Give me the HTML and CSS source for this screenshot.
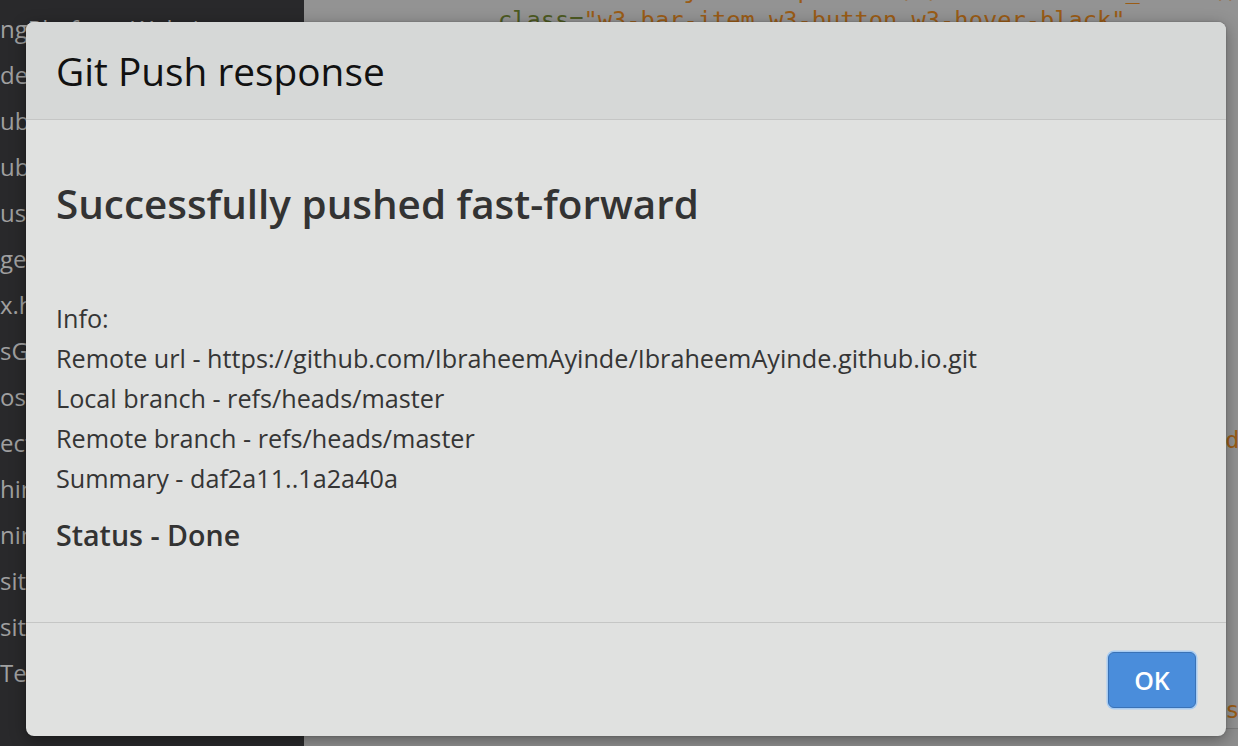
FILE: index.html
```html
<!DOCTYPE html>
<html>
<head>
<meta charset="utf-8">
<title>Git Push response</title>
<link rel="stylesheet" href="styles.css">
</head>
<body>
<div class="app">
  <aside class="sidebar">
    <div class="file">ngPlatform Website</div>
    <div class="file">dex</div>
    <div class="file">ub</div>
    <div class="file">ub</div>
    <div class="file">ush</div>
    <div class="file">geS</div>
    <div class="file">x.h</div>
    <div class="file">sG</div>
    <div class="file">os</div>
    <div class="file">ect</div>
    <div class="file">hin</div>
    <div class="file">nin</div>
    <div class="file">site</div>
    <div class="file">site</div>
    <div class="file">Ter</div>
  </aside>
  <main class="editor">
    <div class="code">
      <div class="line">    <span class="str">&lt;a href="javascript:void(0)" onclick="</span><span class="fn">w3_close()</span></div>
      <div class="line"><span class="attr">class=</span><span class="str">"w3-bar-item w3-button w3-hover-black"</span></div>
      <div class="line"> </div>
      <div class="line"> </div>
      <div class="line"> </div>
      <div class="line"> </div>
      <div class="line"> </div>
      <div class="line"> </div>
      <div class="line"> </div>
      <div class="line"> </div>
      <div class="line"> </div>
      <div class="line"> </div>
      <div class="line"> </div>
      <div class="line"> </div>
      <div class="line"> </div>
      <div class="line"><span class="attr">  class=</span><span class="str">"w3-bar-item w3-button w3-hover-white w3-wide"</span></div>
      <div class="line"> </div>
      <div class="line"> </div>
      <div class="line"> </div>
      <div class="line"> </div>
      <div class="line"> </div>
      <div class="line"> </div>
      <div class="line"> </div>
      <div class="line"> </div>
      <div class="line"><span class="attr">  class=</span><span class="str">"w3-bar-item w3-button w3-hover-white w3-rise"</span></div>
    </div>
    <div class="panel"></div>
  </main>
</div>

<div class="dialog" role="dialog">
  <header class="dialog-header">
    <h1 class="dialog-title">Git Push response</h1>
  </header>
  <section class="dialog-body">
    <h2 class="result">Successfully pushed fast-forward</h2>
    <div class="info">
      <div>Info:</div>
      <div>Remote url - https://github.com/IbraheemAyinde/IbraheemAyinde.github.io.git</div>
      <div>Local branch - refs/heads/master</div>
      <div>Remote branch - refs/heads/master</div>
      <div>Summary - daf2a11..1a2a40a</div>
    </div>
    <div class="status">Status - Done</div>
  </section>
  <footer class="dialog-footer">
    <button class="btn-ok">OK</button>
  </footer>
</div>
</body>
</html>
```
FILE: styles.css
```css
html, body {
  margin: 0;
  padding: 0;
  width: 1238px;
  height: 746px;
  overflow: hidden;
}

body {
  font-family: "Open Sans", "Noto Sans", sans-serif;
  background: #939393;
}

.app {
  display: grid;
  grid-template-columns: 304px 1fr;
  height: 746px;
}

.sidebar {
  background: #29292b;
  padding-top: 6px;
  overflow: hidden;
}

.file {
  font-size: 24px;
  line-height: 46px;
  height: 46px;
  color: #a0a0a0;
  white-space: nowrap;
}

.editor {
  background: #939393;
  display: flex;
  flex-direction: column;
  overflow: hidden;
}

.code {
  padding-top: 5px;
  padding-left: 194px;
  margin-top: -30px;
  font-family: "DejaVu Sans Mono", monospace;
  font-size: 23.7px;
  flex: 1;
}

.line {
  height: 30px;
  line-height: 30px;
  white-space: pre;
}

.attr { color: #4d5a22; }
.str { color: #9a5c16; }
.fn { color: #9a5c16; }

.panel {
  height: 17px;
  border-top: 1px solid #7c7c7c;
  background: #8e8e8e;
}

/* dialog overlay */
.dialog {
  position: absolute;
  top: 22px;
  left: 26px;
  width: 1200px;
  height: 714px;
  display: flex;
  flex-direction: column;
  background: #e0e1e0;
  border-radius: 8px;
  overflow: hidden;
  box-shadow: 0 4px 16px rgba(0, 0, 0, 0.35), 0 0 2px rgba(0, 0, 0, 0.25);
}

.dialog-header {
  height: 97px;
  flex: none;
  display: flex;
  align-items: center;
  padding: 0 30px;
  background: #d6d8d7;
  border-bottom: 1px solid #c5c6c5;
}

.dialog-title {
  margin: 0;
  font-size: 38.8px;
  font-weight: 400;
  line-height: 54px;
  color: #111;
}

.dialog-body {
  flex: 1;
  padding: 57px 30px 0;
  color: #353535;
}

.result {
  margin: 0;
  font-size: 40.4px;
  font-weight: 600;
  line-height: 54px;
  color: #333;
}

.info {
  margin-top: 67px;
  font-size: 25.2px;
  line-height: 40px;
}

.status {
  margin-top: 17px;
  font-size: 28.6px;
  font-weight: 600;
  line-height: 40px;
  color: #333;
}

.dialog-footer {
  height: 113px;
  flex: none;
  border-top: 1px solid #c5c6c5;
  display: flex;
  align-items: center;
  justify-content: flex-end;
  padding-right: 30px;
}

.btn-ok {
  width: 88px;
  height: 56px;
  border: 1px solid #3a72b6;
  border-radius: 6px;
  background: #4a8ddb;
  color: #fff;
  font-family: "Open Sans", "Noto Sans", sans-serif;
  font-size: 25px;
  font-weight: 600;
  box-shadow: 0 0 0 1.5px #a8ccf2;
  padding: 0;
}
```
